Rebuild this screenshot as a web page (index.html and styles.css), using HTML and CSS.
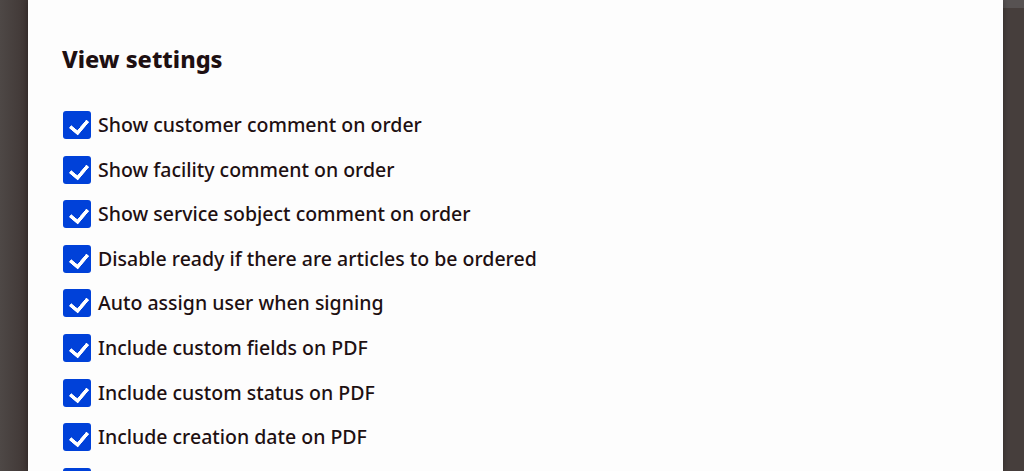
FILE: index.html
```html
<!DOCTYPE html>
<html lang="en">
<head>
    <meta charset="UTF-8">
    <meta name="viewport" content="width=device-width, initial-scale=1.0">
    <title>View settings</title>
    <link rel="stylesheet" href="styles.css">
</head>
<body>
    <div class="topbar"></div>
    <div class="overlay">
        <div class="modal">
            <h2 class="title">View settings</h2>
            <ul class="options">
                <li><label><input type="checkbox" checked><span class="box"></span>Show customer comment on order</label></li>
                <li><label><input type="checkbox" checked><span class="box"></span>Show facility comment on order</label></li>
                <li><label><input type="checkbox" checked><span class="box"></span>Show service sobject comment on order</label></li>
                <li><label><input type="checkbox" checked><span class="box"></span>Disable ready if there are articles to be ordered</label></li>
                <li><label><input type="checkbox" checked><span class="box"></span>Auto assign user when signing</label></li>
                <li><label><input type="checkbox" checked><span class="box"></span>Include custom fields on PDF</label></li>
                <li><label><input type="checkbox" checked><span class="box"></span>Include custom status on PDF</label></li>
                <li><label><input type="checkbox" checked><span class="box"></span>Include creation date on PDF</label></li>
                <li><label><input type="checkbox" checked><span class="box"></span></label></li>
            </ul>
        </div>
    </div>
</body>
</html>
```

FILE: styles.css
```css
* {
    box-sizing: border-box;
}

body {
    margin: 0;
    height: 471px;
    overflow: hidden;
    background-color: #463e3c;
    font-family: "Noto Sans", "Open Sans", sans-serif;
    color: #1e1012;
    position: relative;
}

.topbar {
    height: 8px;
    background-color: #575252;
}

.overlay {
    position: absolute;
    top: 0;
    left: 0;
    right: 0;
    bottom: 0;
    padding: 0 21px 0 28px;
    background: linear-gradient(to right, #4e4846 0, #3f3634 28px, transparent 28px);
}

.modal {
    background-color: #fdfdfd;
    height: 100%;
    padding: 40px 34px 0 34px;
    box-shadow: 0 0 6px rgba(0, 0, 0, 0.35);
}

.title {
    margin: 0 0 32px 0;
    font-size: 23.5px;
    font-weight: 800;
    line-height: 39px;
}

.options {
    list-style: none;
    margin: 0;
    padding: 0;
}

.options li {
    height: 44.6px;
}

.options label {
    display: flex;
    align-items: center;
    gap: 7px;
    font-size: 19.5px;
    font-weight: 500;
    line-height: 28px;
    cursor: pointer;
}

.options input {
    display: none;
}

.box {
    width: 28px;
    height: 28px;
    margin-left: 1px;
    border-radius: 3px;
    background-color: #0041d9;
    position: relative;
    flex-shrink: 0;
}

.box::after {
    content: "";
    position: absolute;
    left: 10px;
    top: 5px;
    width: 8px;
    height: 14px;
    border: solid #fff;
    border-width: 0 4px 4px 0;
    border-radius: 1px;
    transform: rotate(40deg);
}
```
